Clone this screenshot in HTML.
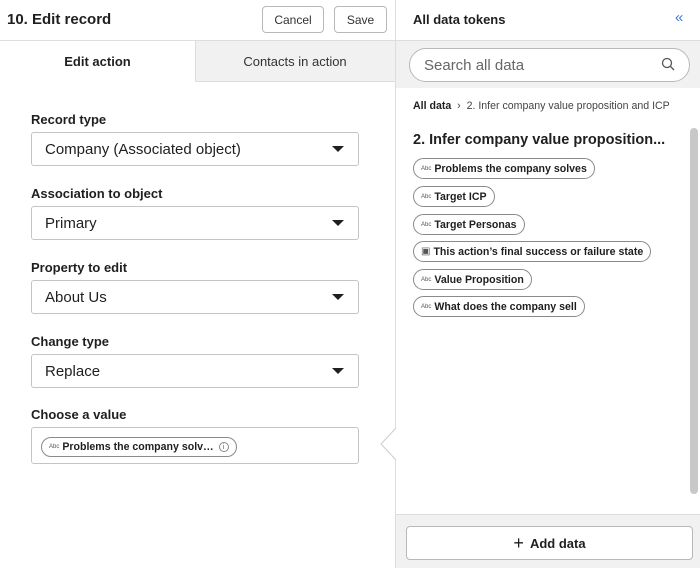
<!DOCTYPE html>
<html><head><style>
*{box-sizing:border-box;margin:0;padding:0}
body{width:700px;height:568px;overflow:hidden;font-family:"Liberation Sans",sans-serif;color:#1f1f1f;background:#fff;position:relative}
.abs{position:absolute}
.btn{position:absolute;border:1px solid #b8b8b8;border-radius:4px;background:#fff;font-size:12px;display:flex;align-items:center;justify-content:center;color:#333}
.lbl{position:absolute;left:31px;font-size:13px;font-weight:bold}
.sel{position:absolute;left:31px;width:328px;height:34px;border:1px solid #c4c4c4;border-radius:3px;font-size:15px;padding-left:13px;display:flex;align-items:center}
.sel:after{content:"";position:absolute;right:14px;top:13px;border-left:6px solid transparent;border-right:6px solid transparent;border-top:6px solid #1f1f1f}
.chip{position:absolute;left:413px;height:21px;border:1px solid #8a8a8a;border-radius:11px;font-size:10.6px;font-weight:bold;display:flex;align-items:center;padding:0 7px 0 7px}
.chip i{font-style:normal;font-size:6px;font-weight:normal;color:#555;margin-right:3px}
</style></head><body>
<div class="abs" style="left:7px;top:11px;font-size:15px;font-weight:bold">10. Edit record</div>
<div class="btn" style="left:262px;top:6px;width:62px;height:27px">Cancel</div>
<div class="btn" style="left:334px;top:6px;width:53px;height:27px">Save</div>
<div class="abs" style="left:0;top:40px;width:396px;height:1px;background:#ddd"></div>
<div class="abs" style="left:195px;top:41px;width:200px;height:41px;background:#f1f1f1;border-left:1px solid #ddd;border-bottom:1px solid #ddd"></div>
<div class="abs" style="left:0;top:54px;width:195px;text-align:center;font-size:13px;font-weight:bold">Edit action</div>
<div class="abs" style="left:195px;top:54px;width:200px;text-align:center;font-size:13px;color:#333">Contacts in action</div>
<div class="abs" style="left:395px;top:0;width:1px;height:568px;background:#ddd"></div>

<div class="lbl" style="top:112px">Record type</div>
<div class="sel" style="top:132px">Company (Associated object)</div>
<div class="lbl" style="top:186px">Association to object</div>
<div class="sel" style="top:206px">Primary</div>
<div class="lbl" style="top:260px">Property to edit</div>
<div class="sel" style="top:280px">About Us</div>
<div class="lbl" style="top:334px">Change type</div>
<div class="sel" style="top:354px">Replace</div>
<div class="lbl" style="top:407px">Choose a value</div>
<div class="abs" style="left:31px;top:427px;width:328px;height:37px;border:1px solid #c4c4c4;border-radius:3px"></div>
<div class="chip" style="left:41px;top:437px;height:20px;font-size:10.6px"><i>Abc</i>Problems the company solv… <span style="margin-left:5px;display:inline-block;width:10px;height:10px;border:1px solid #888;border-radius:50%;font-size:7px;font-weight:normal;text-align:center;line-height:9px;color:#666">i</span></div>
<svg class="abs" style="left:379px;top:428px" width="18" height="32"><path d="M17 0 L2 16 L17 32" fill="#fff" stroke="#ccc"/></svg>

<div class="abs" style="left:413px;top:12px;font-size:13px;font-weight:bold">All data tokens</div>
<div class="abs" style="left:675px;top:9px;font-size:15px;color:#3a7bd5">«</div>
<div class="abs" style="left:396px;top:40px;width:304px;height:48px;background:#f1f1f1;border-top:1px solid #ddd"></div>
<div class="abs" style="left:409px;top:48px;width:281px;height:34px;border:1px solid #b8b8b8;border-radius:17px;background:#fff;font-size:15px;color:#666;padding:8px 0 0 14px">Search all data</div>
<svg class="abs" style="left:661px;top:57px" width="14" height="14"><circle cx="6" cy="6" r="4.5" fill="none" stroke="#555" stroke-width="1.3"/><path d="M9.5 9.5 L13 13" stroke="#555" stroke-width="1.3"/></svg>
<div class="abs" style="left:413px;top:100px;font-size:10.6px;color:#444"><b style="color:#1f1f1f">All data</b> &nbsp;›&nbsp; 2. Infer company value proposition and ICP</div>
<div class="abs" style="left:413px;top:132px;font-size:14.5px;font-weight:bold">2. Infer company value proposition...</div>
<div class="chip" style="top:158px"><i>Abc</i>Problems the company solves</div>
<div class="chip" style="top:186px"><i>Abc</i>Target ICP</div>
<div class="chip" style="top:214px"><i>Abc</i>Target Personas</div>
<div class="chip" style="top:241px"><i style="font-size:10px">▣</i>This action’s final success or failure state</div>
<div class="chip" style="top:269px"><i>Abc</i>Value Proposition</div>
<div class="chip" style="top:296px"><i>Abc</i>What does the company sell</div>
<div class="abs" style="left:690px;top:128px;width:8px;height:366px;border-radius:4px;background:#c8c8c8"></div>
<div class="abs" style="left:396px;top:514px;width:304px;height:54px;background:#f1f1f1;border-top:1px solid #ddd"></div>
<div class="btn" style="left:406px;top:526px;width:287px;height:34px;font-size:13px;font-weight:bold;color:#1f1f1f"><span style="font-weight:normal;font-size:18px;margin-right:6px">+</span>Add data</div>
</body></html>
